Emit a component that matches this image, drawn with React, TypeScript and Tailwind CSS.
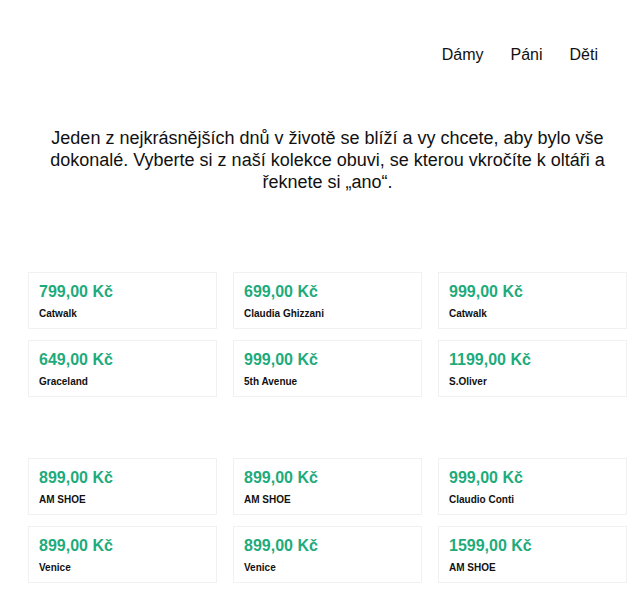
const groups = [
  [
    { price: '799,00 Kč', name: 'Catwalk' },
    { price: '699,00 Kč', name: 'Claudia Ghizzani' },
    { price: '999,00 Kč', name: 'Catwalk' },
    { price: '649,00 Kč', name: 'Graceland' },
    { price: '999,00 Kč', name: '5th Avenue' },
    { price: '1199,00 Kč', name: 'S.Oliver' },
  ],
  [
    { price: '899,00 Kč', name: 'AM SHOE' },
    { price: '899,00 Kč', name: 'AM SHOE' },
    { price: '999,00 Kč', name: 'Claudio Conti' },
    { price: '899,00 Kč', name: 'Venice' },
    { price: '899,00 Kč', name: 'Venice' },
    { price: '1599,00 Kč', name: 'AM SHOE' },
  ],
];

function ProductCard({ price, name }: { price: string; name: string }) {
  return (
    <div className="h-[57px] border border-[#f1f1f1] bg-white px-[10px] pt-[7px]">
      <p className="text-[16px] font-bold leading-[24px] text-[#1eab7c]">{price}</p>
      <p className="mt-[2px] text-[10px] font-bold leading-[15px] text-[#111]">{name}</p>
    </div>
  );
}

export default function App() {
  return (
    <div className="min-h-[600px] bg-white font-['Liberation_Sans',Arial,sans-serif] text-[#111]">
      <div className="ml-[28px] w-[599px]">
        {/* Nav */}
        <nav className="flex justify-end gap-[27px] pr-[29px] pt-[45px] text-[16px] leading-[20px]">
          <a>Dámy</a>
          <a>Páni</a>
          <a>Děti</a>
        </nav>

        {/* Intro */}
        <p className="mt-[62px] px-[22px] text-center text-[18px] leading-[22px]">
          Jeden z nejkrásnějších dnů v životě se blíží a vy chcete, aby bylo vše dokonalé. Vyberte si z naší kolekce obuvi, se kterou vkročíte k oltáři a řeknete si „ano“.
        </p>

        {/* Products */}
        <div className="mt-[79px] flex flex-col gap-[61px]">
          {groups.map((items, gi) => (
            <div key={gi} className="grid grid-cols-3 gap-x-[16px] gap-y-[11px]">
              {items.map((item, i) => (
                <ProductCard key={i} price={item.price} name={item.name} />
              ))}
            </div>
          ))}
        </div>
      </div>
    </div>
  );
}
